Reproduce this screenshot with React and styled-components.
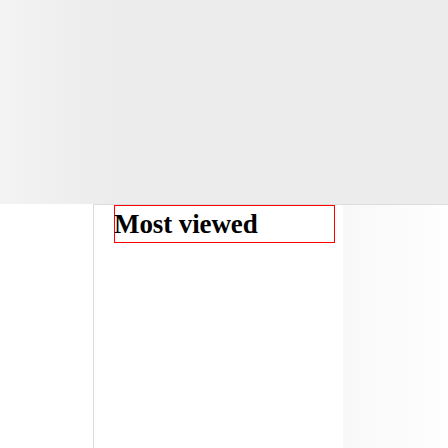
import React from "react";
import styled, { createGlobalStyle } from "styled-components";

const Global = createGlobalStyle`
  html, body { margin: 0; padding: 0; background: #ffffff; }
  body { width: 448px; height: 448px; overflow: hidden; font-family: "Liberation Serif", serif; }
`;

const Page = styled.div`
  display: flex;
  flex-direction: column;
  width: 448px;
  height: 448px;
`;

const Masthead = styled.header`
  height: 204px;
  flex: none;
  background: linear-gradient(to right, #f3f3f3 0px, #ececec 110px, #ececec 100%);
`;

const Body = styled.div`
  display: flex;
  flex: 1;
`;

const Gutter = styled.div`
  width: 93px;
  flex: none;
  background: #ffffff;
`;

const Container = styled.div`
  display: flex;
  flex: 1;
  border-top: 1px solid #dcdcdc;
  border-left: 1px solid #dcdcdc;
`;

const Main = styled.main`
  width: 249px;
  flex: none;
  padding-left: 20px;
  box-sizing: border-box;
  background: #ffffff;
`;

const Heading = styled.h2`
  margin: 0;
  width: 221px;
  box-sizing: border-box;
  border: 1px solid #ff0000;
  font-family: "Liberation Serif", "Times New Roman", serif;
  font-weight: 700;
  font-size: 27px;
  line-height: 36px;
  color: #000000;
  letter-spacing: -0.1px;
  padding: 0;
  margin-left: 0;
  text-indent: -1px;
`;

const Aside = styled.aside`
  flex: 1;
  background: linear-gradient(to right, #f8f8f8, #fefefe);
`;

export default function App() {
  return (
    <>
      <Global />
      <Page>
        <Masthead />
        <Body>
          <Gutter />
          <Container>
            <Main>
              <Heading>Most viewed</Heading>
            </Main>
            <Aside />
          </Container>
        </Body>
      </Page>
    </>
  );
}
